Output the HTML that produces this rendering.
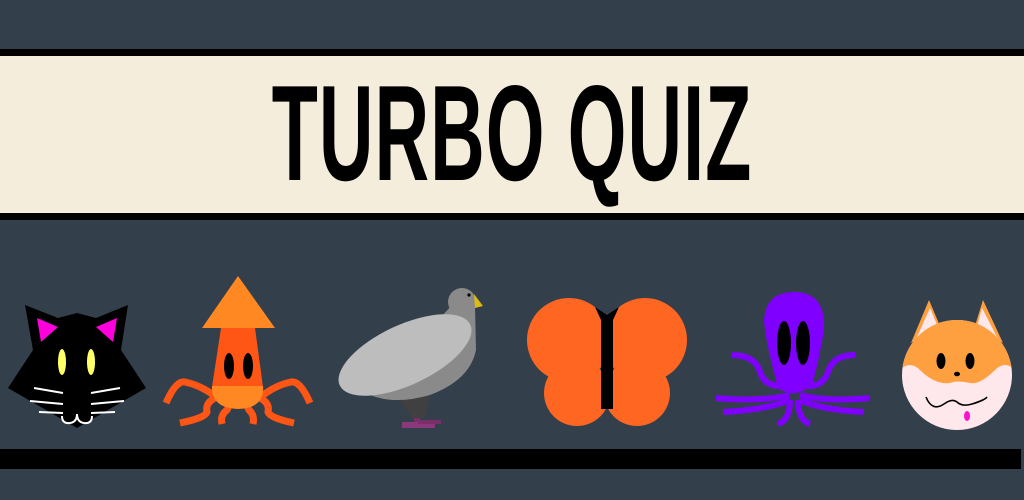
<!DOCTYPE html>
<html><head><meta charset="utf-8"><style>
html,body{margin:0;padding:0;}
body{width:1024px;height:500px;background:#333f4b;position:relative;overflow:hidden;}
.band{position:absolute;left:0;width:1024px;top:49px;height:171px;background:#000;}
.cream{position:absolute;left:0;width:1024px;top:56px;height:157px;background:#f5eddc;}
.title{position:absolute;left:0;top:58px;width:1024px;text-align:center;font-family:"Liberation Sans",sans-serif;font-weight:bold;font-size:136px;line-height:150px;color:#000;}
.title span{display:inline-block;transform:scaleX(0.555);transform-origin:center;letter-spacing:2px;}
.bar{position:absolute;left:0;top:449px;width:1021px;height:20px;background:#000;}
svg{position:absolute;left:0;top:0;}
</style></head><body>
<div class="band"></div><div class="cream"></div>
<div class="title"><span>TURBO QUIZ</span></div>
<div class="bar"></div>
<svg width="1024" height="500" viewBox="0 0 1024 500">
<!-- cat -->
<polygon points="25,305 58,318 77,313 96,318 128,305 121,350 146,388 77,428 8,388 33,350" fill="#000"/>
<polygon points="37,318 58,327 41,342" fill="#ff00dd"/>
<polygon points="117,318 96,327 113,342" fill="#ff00dd"/>
<ellipse cx="62" cy="362" rx="4" ry="13" fill="#ffff66"/>
<ellipse cx="91" cy="362" rx="4" ry="13" fill="#ffff66"/>
<g stroke="#fff" stroke-width="2" fill="none">
<line x1="34" y1="388" x2="63" y2="393"/><line x1="30" y1="401" x2="63" y2="404"/><line x1="39" y1="412" x2="63" y2="413"/>
<line x1="120" y1="388" x2="91" y2="393"/><line x1="124" y1="401" x2="91" y2="404"/><line x1="115" y1="412" x2="91" y2="413"/>
<path d="M62,416 Q62,424 70,423 Q77,422 77,414 Q77,422 84,423 Q92,424 92,416"/>
</g>
<!-- squid -->
<g stroke="#ff5515" stroke-width="7" fill="none" stroke-linecap="butt">
<path d="M166,403 Q176,380 185,382 Q200,385 215,396"/>
<path d="M310,403 Q300,380 291,382 Q276,385 262,396"/>
<path d="M180,423 Q205,418 207,412 Q205,403 215,398"/>
<path d="M294,423 Q270,418 268,412 Q270,403 260,398"/>
<path d="M222,424 Q220,415 227,410 Q230,405 228,400"/>
<path d="M253,424 Q255,415 249,410 Q246,405 248,400"/>
</g>
<polygon points="238,276 202,328 275,328" fill="#ff8822"/>
<polygon points="221,328 255,328 263,387 212,387" fill="#ff5515"/>
<path d="M212,386 L263,386 Q265,408 238,409 Q211,408 212,386Z" fill="#ff8822"/>
<ellipse cx="229" cy="366" rx="5" ry="13" fill="#000"/>
<ellipse cx="248" cy="366" rx="5" ry="13" fill="#000"/>
<!-- pigeon -->
<rect x="414" y="413" width="6" height="14" fill="#7a2f6a" transform="rotate(-15 417 420)"/>
<rect x="402" y="422" width="33" height="6" fill="#8a3a7a"/>
<rect x="418" y="420" width="23" height="4" fill="#7a2f6a"/>
<path d="M400,400 L430,395 L425,418 L412,418Z" fill="#404040"/>
<circle cx="462" cy="302" r="14" fill="#8a8a8a"/>
<path d="M452,305 L475,306 L476,350 Q470,380 430,395 Q395,405 370,395 L420,340Z" fill="#8a8a8a"/>
<polygon points="474,294 483,306 475,308" fill="#ddbb11"/>
<circle cx="469" cy="295" r="1.6" fill="#000"/>
<ellipse cx="405" cy="355" rx="72" ry="30" transform="rotate(-25 405 355)" fill="#bdbdbd"/>
<!-- butterfly -->
<g fill="#ff6622">
<circle cx="569" cy="340" r="42"/><circle cx="577" cy="393" r="33"/>
<circle cx="645" cy="340" r="42"/><circle cx="637" cy="393" r="33"/>
</g>
<rect x="601" y="317" width="12" height="92" fill="#000"/>
<path d="M595,307 L607,315 L619,307 L613,320 L601,320Z" fill="#000"/>
<!-- octopus -->
<g stroke="#7f00ff" stroke-width="6" fill="none">
<path d="M732,355 Q755,355 760,372 Q766,390 790,385"/>
<path d="M855,355 Q833,355 828,372 Q822,390 800,385"/>
<path d="M716,398 Q760,402 790,395"/>
<path d="M870,398 Q826,402 800,395"/>
<path d="M723,412 Q765,410 790,400"/>
<path d="M864,412 Q822,410 800,400"/>
<path d="M778,424 Q790,420 790,400"/>
<path d="M810,424 Q798,420 798,400"/>
</g>
<path d="M794,292 Q826,292 824,330 Q818,365 812,385 Q795,400 778,388 Q765,340 764,320 Q766,292 794,292Z" fill="#7f00ff"/>
<ellipse cx="784" cy="343" rx="7" ry="22" fill="#000"/>
<ellipse cx="803" cy="343" rx="7" ry="22" fill="#000"/>
<!-- fox -->
<defs><clipPath id="fc"><circle cx="957" cy="375" r="55"/></clipPath></defs>
<polygon points="929,300 911,343 940,326" fill="#ffa040"/>
<polygon points="930,308 917,337 938,327" fill="#ffe8ec"/>
<polygon points="983,300 1003,343 975,326" fill="#ffa040"/>
<polygon points="982,308 997,337 977,327" fill="#ffe8ec"/>
<circle cx="957" cy="375" r="55" fill="#ffe8ec"/>
<path d="M900,320 L1015,320 L1015,370 Q1005,360 995,370 Q980,385 970,383 Q957,380 950,383 Q935,385 920,370 Q910,360 900,370Z" fill="#ffa040" clip-path="url(#fc)"/>
<ellipse cx="941" cy="361" rx="4.5" ry="8" fill="#000"/>
<ellipse cx="970" cy="361" rx="4.5" ry="8" fill="#000"/>
<ellipse cx="957" cy="374" rx="3" ry="2.3" fill="#000"/>
<path d="M926,397 Q932,412 944,404 Q952,398 957,402 Q962,407 972,404 Q985,400 987,397" stroke="#000" stroke-width="1.6" fill="none"/>
<ellipse cx="967" cy="416" rx="3" ry="5" fill="#ff11cc"/>
</svg>
</body></html>
